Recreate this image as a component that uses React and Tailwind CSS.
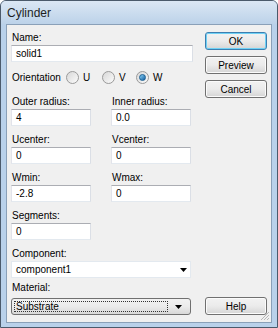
const font = { fontFamily: '"Liberation Sans", Arial, sans-serif' };

function Field({ label, value, className = '' }) {
  return (
    <div className={className}>
      <div className="h-[13px] leading-[13px] pl-[1px]">{label}</div>
      <div className="mt-[1px] h-[17px] bg-white border border-[#abadb3] border-t-[#abadb3] border-l-[#e2e3ea] border-r-[#dbdfe6] border-b-[#e3e9ef] px-[4px] leading-[15px]">
        {value}
      </div>
    </div>
  );
}

function Radio({ label, checked }) {
  return (
    <div className="flex items-center gap-[4px]">
      <span className="w-[13px] h-[13px] rounded-full border border-[#9a9a9a] bg-gradient-to-br from-[#d8d8d8] to-[#fbfbfb] flex items-center justify-center">
        {checked && <span className="w-[7px] h-[7px] rounded-full bg-gradient-to-br from-[#8ad3f7] to-[#0d5e9f] border border-[#1b5f93]" />}
      </span>
      <span>{label}</span>
    </div>
  );
}

function Btn({ children, def }) {
  return (
    <div
      className={`w-[62px] h-[18px] rounded-[3px] border flex items-center justify-center bg-gradient-to-b from-[#f2f2f2] via-[#ebebeb] to-[#d5d5d5] ${
        def ? 'border-[#3c7fb1] shadow-[inset_0_0_0_1px_#6fd1f5]' : 'border-[#707070] shadow-[inset_0_0_0_1px_#fbfbfb]'
      }`}
    >
      {children}
    </div>
  );
}

function Arrow() {
  return (
    <svg width="7" height="4" viewBox="0 0 7 4">
      <path d="M0 0h7L3.5 4z" fill="#000" />
    </svg>
  );
}

export default function App() {
  return (
    <div style={font} className="w-[278px] h-[328px] text-[10px] text-black bg-[#b9d1ea] border border-[#4b5a6b] rounded-t-[6px] flex flex-col overflow-hidden">
      <div className="h-[23px] bg-gradient-to-b from-[#dbe7f4] to-[#bcd2e9] flex items-center pl-[6px] text-[12px] text-[#1e1e1e]">
        Cylinder
      </div>
      <div className="flex-1 mx-[5px] mb-[4px] border border-[#8aa0b8] bg-[#f0f0f0] flex relative">
        <div className="w-[186px] pl-[4px] pt-[6px]">
          <Field label="Name:" value="solid1" />
          <div className="flex items-center mt-[8px] h-[15px]">
            <span className="w-[55px] pl-[1px]">Orientation</span>
            <div className="w-[36px]"><Radio label="U" /></div>
            <div className="w-[34px]"><Radio label="V" /></div>
            <Radio label="W" checked />
          </div>
          <div className="grid grid-cols-[80px_80px] gap-x-[20px] gap-y-[7px] mt-[10px]">
            <Field label="Outer radius:" value="4" />
            <Field label="Inner radius:" value="0.0" />
            <Field label="Ucenter:" value="0" />
            <Field label="Vcenter:" value="0" />
            <Field label="Wmin:" value="-2.8" />
            <Field label="Wmax:" value="0" />
            <Field label="Segments:" value="0" />
          </div>
          <div className="mt-[7px]">
            <div className="h-[13px] leading-[13px] pl-[1px]">Component:</div>
            <div className="mt-[1px] h-[17px] w-[180px] bg-white border border-[#e3e9ef] flex items-center justify-between px-[4px]">
              <span>component1</span>
              <span className="mr-[-1px]"><Arrow /></span>
            </div>
          </div>
          <div className="mt-[3px]">
            <div className="h-[13px] leading-[13px] pl-[1px]">Material:</div>
            <div className="mt-[4px] h-[17px] w-[180px] rounded-[3px] border border-[#707070] bg-gradient-to-b from-[#f2f2f2] via-[#ebebeb] to-[#d8d8d8] flex items-center p-[2px]">
              <div className="flex-1 h-full border border-dotted border-[#333] flex items-center pl-[1px]">Substrate</div>
              <div className="w-[20px] flex items-center justify-center"><Arrow /></div>
            </div>
          </div>
        </div>
        <div className="ml-auto mr-[4px] pt-[7px] flex flex-col">
          <div className="flex flex-col gap-[6px]">
            <Btn def>OK</Btn>
            <Btn>Preview</Btn>
            <Btn>Cancel</Btn>
          </div>
          <div className="mt-auto mb-[7px]">
            <Btn>Help</Btn>
          </div>
        </div>
        <svg className="absolute right-[1px] bottom-[1px]" width="11" height="11" viewBox="0 0 11 11">
          <path d="M10 2L2 10M10 5L5 10M10 8L8 10" stroke="#b8b8b8" strokeWidth="1" />
        </svg>
      </div>
    </div>
  );
}
